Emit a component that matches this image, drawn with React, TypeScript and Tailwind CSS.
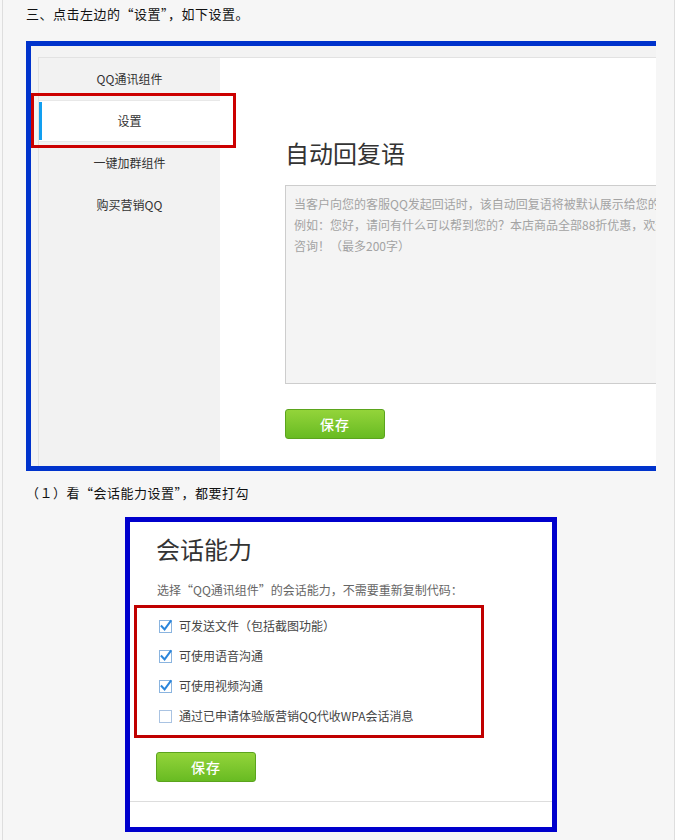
import React from "react";

const font = { fontFamily: '"Noto Sans CJK SC", "Noto Sans", sans-serif' };

function Check({ checked }: { checked: boolean }) {
  return (
    <svg width="14" height="14" viewBox="0 0 14 14" className="shrink-0">
      <rect x="0.5" y="1.5" width="12" height="12" fill="#fff" stroke={checked ? "#8ab4df" : "#a9c3e2"} />
      {checked && (
        <path d="M2.6 7.2 L5.6 10.4 L11.6 2.2" fill="none" stroke="#2a86dc" strokeWidth="2" strokeLinecap="square" />
      )}
    </svg>
  );
}

function SaveButton() {
  return (
    <button className="w-[100px] h-[30px] rounded-[3px] border border-[#5ba41d] bg-gradient-to-b from-[#93d43a] to-[#68bb22] text-white text-[14px] leading-[28px] font-medium tracking-[1px]">
      保存
    </button>
  );
}

export default function App() {
  const items = [
    { label: "可发送文件（包括截图功能）", checked: true },
    { label: "可使用语音沟通", checked: true },
    { label: "可使用视频沟通", checked: true },
    { label: "通过已申请体验版营销QQ代收WPA会话消息", checked: false },
  ];
  return (
    <div className="w-[675px] h-[840px] bg-[#f7f7f7] pl-[2px] overflow-hidden" style={font}>
      <div className="h-full border-l border-r border-[#dedede] bg-[#f6f6f6]">
        <p className="pl-[23px] pt-[6px] text-[13px] leading-[15px] tracking-[0.5px] text-[#111] [font-feature-settings:'fwid']">
          三、点击左边的“设置”，如下设置。
        </p>

        {/* blue box 1 */}
        <div className="relative mt-[20px] ml-[23px] w-[630px] h-[430px] border-t-[5px] border-l-[5px] border-b-[5px] border-[#0033cc] bg-[#f3f3f3] pt-[11px] pl-[7px] flex">
          <div className="w-[182px] h-full bg-[#f2f2f2] border-l border-t border-[#e2e2e2] text-[12px] text-[#333]">
            <div className="h-[42px] flex items-center justify-center">QQ通讯组件</div>
            <div className="relative h-[42px] flex items-center justify-center bg-white border-y border-[#e8e8e8]">
              <span className="absolute left-0 top-[1px] bottom-[1px] w-[3px] bg-[#129ff0]" />
              设置
            </div>
            <div className="h-[42px] flex items-center justify-center">一键加群组件</div>
            <div className="h-[42px] flex items-center justify-center">购买营销QQ</div>
          </div>
          <div className="flex-1 h-full bg-white border-t border-[#e2e2e2] overflow-hidden pl-[65px]">
            <h1 className="mt-[80px] text-[24px] leading-[30px] text-[#333]">自动回复语</h1>
            <div className="mt-[17px] w-[440px] h-[199px] border border-[#cdcdcd] bg-[#f4f4f4] pl-[8px] pt-[7px] text-[12px] leading-[21px] text-[#a3a3a3] whitespace-nowrap">
              当客户向您的客服QQ发起回话时，该自动回复语将被默认展示给您的访客。
              <br />
              例如：您好，请问有什么可以帮到您的？本店商品全部88折优惠，欢迎
              <br />
              咨询！（最多200字）
            </div>
            <div className="mt-[25px]">
              <SaveButton />
            </div>
          </div>
          <div className="absolute left-0 top-[47px] w-[205px] h-[55px] border-[3px] border-[#cc0000]" />
        </div>

        <p className="pl-[23px] mt-[14px] text-[13px] leading-[15px] tracking-[0.5px] text-[#111] [font-feature-settings:'fwid']">
          （1）看“会话能力设置”，都要打勾
        </p>

        {/* blue box 2 */}
        <div className="relative mt-[17px] ml-[122px] w-[432px] h-[315px] border-[5px] border-[#0000cc] bg-white pt-[12px]">
          <h2 className="pl-[26px] text-[24px] leading-[30px] text-[#333]">会话能力</h2>
          <p className="pl-[27px] mt-[18px] text-[12px] leading-[16px] text-[#666]">选择“QQ通讯组件”的会话能力，不需要重新复制代码：</p>
          <div className="mt-[13px] pl-[29px]">
            {items.map((it) => (
              <div key={it.label} className="h-[30px] flex items-center gap-[6px] text-[12px] text-[#444]">
                <Check checked={it.checked} />
                <span>{it.label}</span>
              </div>
            ))}
          </div>
          <div className="mt-[21px] pl-[26px]">
            <SaveButton />
          </div>
          <div className="mt-[19px] border-t border-[#dddddd]" />
          <div className="absolute left-[4px] top-[83px] w-[350px] h-[133px] border-[3px] border-[#c00000]" />
        </div>
      </div>
    </div>
  );
}
